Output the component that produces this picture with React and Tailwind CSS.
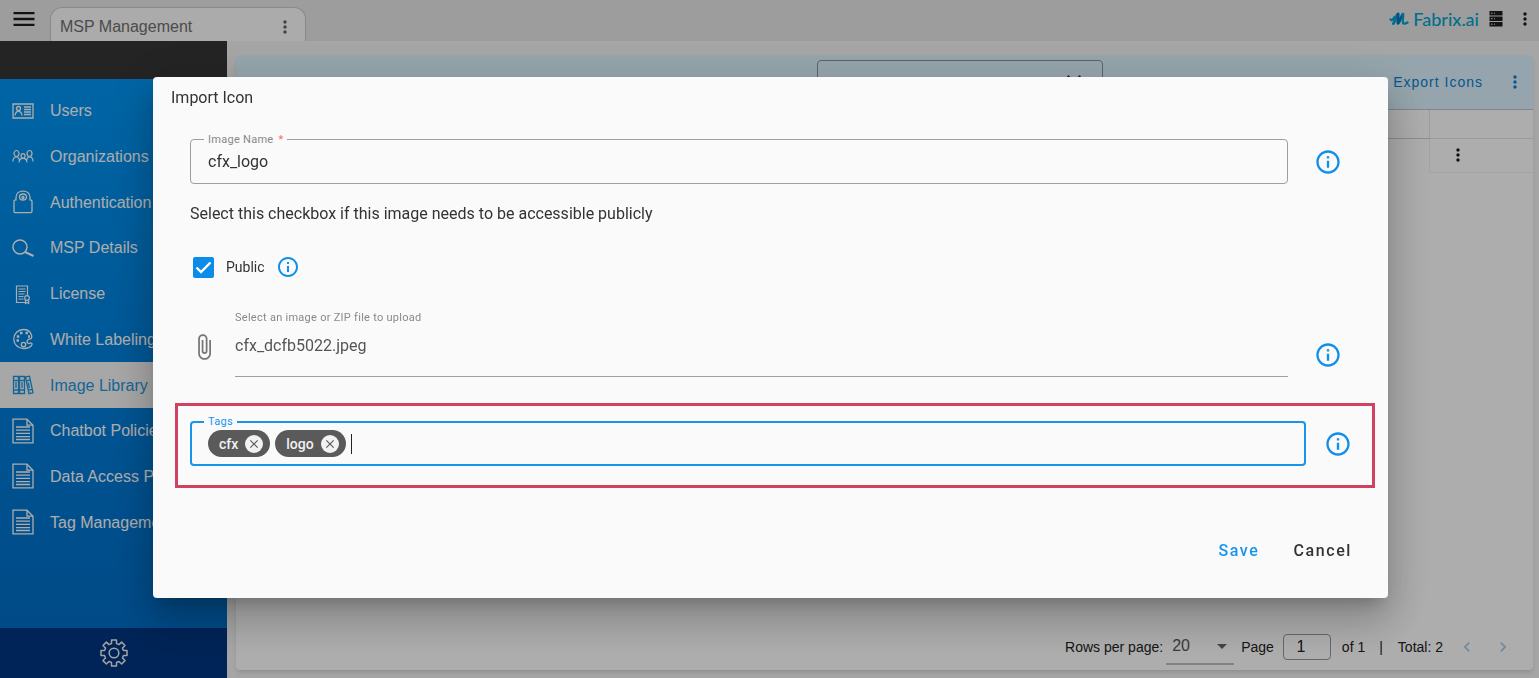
import { useState } from "react";
import {
  MdArrowDropDown,
  MdAttachFile,
  MdChevronLeft,
  MdChevronRight,
  MdClose,
  MdInfoOutline,
  MdMenu,
  MdMoreVert,
} from "react-icons/md";

const iconProps = {
  width: 22,
  height: 26,
  viewBox: "0 0 22 26",
  fill: "none",
  stroke: "currentColor",
  strokeWidth: 1.3,
};

function UsersIcon() {
  return (
    <svg {...iconProps}>
      <path d="M1 6h20v14H1z" />
      <circle cx="6.5" cy="10.5" r="2" />
      <path d="M3 17.5c.3-3 1.5-4.2 3.5-4.2s3.2 1.2 3.5 4.2M12 9h7M12 11.5h7M12 14h7M12 16.5h7" />
    </svg>
  );
}

function OrganizationsIcon() {
  return (
    <svg {...iconProps} strokeWidth={1.2}>
      <ellipse cx="4.5" cy="9.5" rx="2.5" ry="3" />
      <ellipse cx="17.5" cy="9.5" rx="2.5" ry="3" />
      <ellipse cx="11" cy="12" rx="2" ry="2.4" />
      <path d="M1 17.5c0-3 1-4.500 3.500-4.500 1.500 0 2.500 1 2.800 3M21 17.500c0-3-1-4.500-3.500-4.500-1.500 0-2.500 1-2.800 3M7 18.500c.2-3 1.800-4.100 4-4.100s3.800 1.100 4 4.100" />
    </svg>
  );
}

function AuthIcon() {
  return (
    <svg {...iconProps}>
      <path d="M2 12.5c0-1 .8-1.700 2-1.700V8.500C4 4.500 7 2.200 11 2.200s7 2.300 7 6.300v2.300c1.200 0 2 .7 2 1.700v9.800c0 .8-.5 1.300-1.300 1.300H3.300c-.8 0-1.300-.5-1.300-1.300z" />
      <ellipse cx="11" cy="8" rx="3.500" ry="3" />
      <circle cx="11" cy="8.500" r="1" />
    </svg>
  );
}

function DetailsIcon() {
  return (
    <svg {...iconProps} strokeWidth={1.5}>
      <circle cx="8" cy="12" r="7" />
      <path d="M13 17l8.5 4" strokeWidth="2" />
    </svg>
  );
}

function LicenseIcon() {
  return (
    <svg {...iconProps} strokeWidth={1.2}>
      <path d="M13 21.5H4.500V5h11v9M6.500 8h7M6.500 10.500h7M6.500 13h6M6.500 15.500h5M6.500 18h5" />
      <circle cx="15" cy="17" r="2.300" />
      <path d="M13.500 19v3.500l1.500-1 1.700 1V19" />
    </svg>
  );
}

function PaletteIcon() {
  return (
    <svg {...iconProps}>
      <path d="M11.5 3.5C6 3.5 1.800 7.500 1.800 13S6 22.500 11.500 22.500c4.500 0 7.500-1.500 8.500-4 .4-1.200-1-1.800-2-1.300-1.500.7-3 0-3-1.700 0-2 2-2.300 3.500-2.700 1.500-.5 1.500-2.500.8-4.300-1.200-3-4.300-5-7.800-5z" />
      <circle cx="11.500" cy="18.500" r="2.200" />
      <path d="M8 7h2.500M13.500 7h2.500M4.800 10.500h2.500M4.500 14.500h2.500M16 10.500h2" strokeWidth="2.600" />
    </svg>
  );
}

function LibraryIcon() {
  return (
    <svg {...iconProps}>
      <path d="M1.500 4.500h5v17h-5zM7.500 4.500h5v17h-5zM13.500 5l4-.8 3.500 16.600-4 .9zM1.500 8.500h5M1.500 18h5M7.500 8.500h5M7.500 18h5M14.300 8.800l4-.8M16.300 18.200l4-.8" />
      <path d="M4 10v6M10 10v6M16.300 10.500l1.200 5.500" />
    </svg>
  );
}

function DocIcon() {
  return (
    <svg {...iconProps}>
      <path d="M1 1.200h14l6 6v17.600H1z" />
      <path d="M15 1.200v6h6M4 9h14M4 12.200h14M4 15.400h14M4 18.600h14M4 21.500h14" />
    </svg>
  );
}

function GearIcon() {
  return (
    <svg
      width="28"
      height="28"
      viewBox="0 0 28 28"
      fill="none"
      stroke="currentColor"
      strokeWidth="1.5"
      strokeLinejoin="round"
    >
      <path d="M11.500 1h5v3.600l2.500 1 2.600-2.500 3.400 3.400-2.500 2.600 1 2.400H27v5h-3.500l-1 2.500 2.500 2.600-3.400 3.400-2.600-2.500-2.500 1V27h-5v-3.500l-2.500-1L6.400 25 3 21.600 5.500 19l-1-2.500H1v-5h3.500l1-2.400L3 6.500l3.400-3.400L9 5.600l2.500-1z" />
      <circle cx="14" cy="14" r="4.800" />
    </svg>
  );
}

function BrandMark() {
  return (
    <svg
      width="20"
      height="16"
      viewBox="0 0 20 16"
      fill="none"
      strokeLinecap="round"
      strokeLinejoin="round"
    >
      <path d="M1.500 8.500C2.500 10 4 8.500 5.500 6" stroke="#00a5d0" strokeWidth="2.200" />
      <path d="M4.500 12.500C5.500 12 7 4 9 3" stroke="#00a5d0" strokeWidth="3" />
      <path d="M9 3c1 1.500-1 8 0 9.500C10.500 12.500 12 4.500 14 3" stroke="#0079c4" strokeWidth="2.600" />
      <path d="M14 3c.8 2-1.200 8 .3 9.300 1 .7 2.500.2 4.200-.8" stroke="#00a5d0" strokeWidth="2.300" />
    </svg>
  );
}

function ServerIcon() {
  return (
    <svg width="14" height="16" viewBox="0 0 14 16">
      <path
        fill="#1d1d1d"
        d="M.5 0h13v4.500H.5zM.5 5.500h13V10H.5zM.5 11h13v4.500H.5z"
      />
      <path stroke="#e8e8e8" d="M2 2.200h1.500M5 2.200h1M2 7.700h1.500M5 7.700h1M2 13.200h1.500M5 13.200h1" />
    </svg>
  );
}

const NAV = [
  { label: "Users", icon: UsersIcon },
  { label: "Organizations", icon: OrganizationsIcon },
  { label: "Authentication", icon: AuthIcon },
  { label: "MSP Details", icon: DetailsIcon },
  { label: "License", icon: LicenseIcon },
  { label: "White Labeling", icon: PaletteIcon },
  { label: "Image Library", icon: LibraryIcon, active: true },
  { label: "Chatbot Policies", icon: DocIcon },
  { label: "Data Access Policies", icon: DocIcon },
  { label: "Tag Management", icon: DocIcon },
];

function Header() {
  return (
    <header className="flex h-[41px] items-end bg-[#e8e8e8]">
      <button aria-label="Menu" className="mb-2 ml-[10px] text-[#1d1d1d]">
        <MdMenu size={28} />
      </button>
      <div className="ml-3 flex h-[34px] w-64 items-center justify-between rounded-t-xl border border-b-0 border-[#c4cccc] bg-[#fcfcfc] pt-1 pr-[10px] pl-[9px]">
        <span className="text-base text-[#707070]">MSP Management</span>
        <button aria-label="Tab options" className="text-[#5c6370]">
          <MdMoreVert size={20} />
        </button>
      </div>
      <div className="ml-auto flex h-full items-center pr-1 pb-1">
        <BrandMark />
        <span className="ml-1 font-['Lato',sans-serif] text-lg leading-5 font-medium text-[#00a5d0]">
          Fabrix.ai
        </span>
        <button aria-label="Servers" className="ml-[10px]">
          <ServerIcon />
        </button>
        <button aria-label="More" className="ml-3 text-[#1d1d1d]">
          <MdMoreVert size={20} />
        </button>
      </div>
    </header>
  );
}

function Sidebar() {
  return (
    <aside className="flex w-[227px] shrink-0 flex-col bg-linear-to-b from-[#0098f7] to-[#006ac4]">
      <div className="h-[38px] bg-[#353535]" />
      <nav className="mt-[9px] grid h-[457px] auto-rows-fr">
        {NAV.map((item) => {
          const Icon = item.icon;
          return (
            <a
              key={item.label}
              href="#"
              className={`flex items-center gap-4 pl-3 whitespace-nowrap ${
                item.active ? "bg-[#f7f7f7] text-[#1f96dc]" : "text-white"
              }`}
            >
              <Icon />
              <span className="pt-px text-base">{item.label}</span>
            </a>
          );
        })}
      </nav>
      <div className="mt-auto flex h-[50px] items-center justify-center bg-[#003580] text-[#f0f0f0]">
        <button aria-label="Settings">
          <GearIcon />
        </button>
      </div>
    </aside>
  );
}

function LibraryPage() {
  return (
    <main className="flex min-w-0 flex-1 bg-[#f5f5f5] pt-[14px] pr-[6px] pb-2 pl-[9px]">
      <section className="flex flex-1 flex-col overflow-hidden rounded bg-white shadow-md">
        <div className="flex h-[55px] items-center justify-end border-b border-[#b9c5ca] bg-[#def4ff] pr-2">
          <div className="mr-[290px] flex h-[45px] w-[286px] items-center rounded border border-[#8a9499] pr-4">
            <input aria-label="Search" className="min-w-0 flex-1 bg-transparent outline-none" />
            <button aria-label="Clear search" className="text-[#444]">
              <MdClose size={24} />
            </button>
          </div>
          <button className="text-sm tracking-[1px] text-[#0a7fd0]">Export Icons</button>
          <button aria-label="Library actions" className="ml-[22px] text-[#0a7fd0]">
            <MdMoreVert size={20} />
          </button>
        </div>

        <table className="w-full table-fixed">
          <thead>
            <tr className="h-7">
              <th className="border-b border-[#cfcfcf]" />
              <th className="w-26 border-b border-l border-[#e4e4e4]" />
            </tr>
          </thead>
          <tbody>
            <tr className="h-[34px]">
              <td />
              <td className="border-b border-l border-[#f0f0f0]">
                <button aria-label="Row actions" className="ml-[18px] block text-[#1d1d1d]">
                  <MdMoreVert size={20} />
                </button>
              </td>
            </tr>
          </tbody>
        </table>

        <footer className="mt-auto flex items-center justify-end pr-5 pb-[5px] text-sm text-[#222]">
          <label htmlFor="rows">Rows per page:</label>
          <div className="relative ml-[3px] flex h-9 w-17 items-center border-b-2 border-[#c0c0c0]">
            <select
              id="rows"
              defaultValue="20"
              className="w-full appearance-none bg-transparent pl-[6px] text-base text-[#555]"
            >
              <option>20</option>
              <option>50</option>
            </select>
            <MdArrowDropDown size={24} className="pointer-events-none absolute right-0 text-[#666]" />
          </div>
          <label htmlFor="page" className="ml-[7px]">
            Page
          </label>
          <input
            id="page"
            defaultValue="1"
            className="ml-[9px] h-[26px] w-12 rounded border border-[#999] pr-3 text-center text-base"
          />
          <span className="ml-[11px]">of 1</span>
          <span className="ml-[14px]">|</span>
          <span className="ml-[15px]">Total: 2</span>
          <button aria-label="Previous page" className="ml-[14px] text-[#a9cbe6]">
            <MdChevronLeft size={20} />
          </button>
          <button aria-label="Next page" className="ml-4 text-[#a9cbe6]">
            <MdChevronRight size={20} />
          </button>
        </footer>
      </section>
    </main>
  );
}

function InfoButton({ size = 28 }) {
  return (
    <button type="button" aria-label="More information" className="text-[#0f8fea]">
      <MdInfoOutline size={size} />
    </button>
  );
}

function Chip({ label, onRemove }) {
  return (
    <span className="flex h-[27px] items-center gap-[7px] rounded-full bg-[#5a5a5a] pr-[7px] pl-[11px] text-sm font-medium text-[#f0f0f0]">
      {label}
      <button
        type="button"
        aria-label={`Remove ${label}`}
        onClick={onRemove}
        className="flex size-[18px] items-center justify-center rounded-full bg-[#f2f2f2] text-[#5a5a5a]"
      >
        <MdClose size={14} />
      </button>
    </span>
  );
}

function ImportDialog() {
  const [tags, setTags] = useState(["cfx", "logo"]);

  return (
    <div className="fixed inset-0 z-10 flex items-start bg-black/32 pt-[77px] pr-[151px] pl-[153px] font-['Roboto',sans-serif] text-[#333]">
      <form
        role="dialog"
        aria-label="Import Icon"
        onSubmit={(e) => e.preventDefault()}
        className="w-full rounded bg-[#fafafa] pb-[35px] shadow-[0_11px_15px_-7px_rgba(0,0,0,0.2),0_24px_38px_3px_rgba(0,0,0,0.14),0_9px_46px_8px_rgba(0,0,0,0.12)]"
      >
        <h2 className="pt-[9px] pl-[18px] text-base leading-6">Import Icon</h2>

        {/* Image name */}
        <div className="mt-[29px] flex items-center gap-[26px] pr-[46px] pl-[37px]">
          <div className="relative flex-1">
            <label
              htmlFor="name"
              className="absolute -top-[6px] left-[14px] bg-[#fafafa] px-1 text-[11px] leading-[14px] tracking-wide text-[#888]"
            >
              Image Name <span className="ml-[2px] text-[#ff6b6b]">*</span>
            </label>
            <input
              id="name"
              defaultValue="cfx_logo"
              className="block h-[45px] w-full rounded border border-[#9e9e9e] px-[17px] text-base outline-none"
            />
          </div>
          <InfoButton />
        </div>

        {/* Visibility */}
        <p className="mt-[18px] pl-[37px] text-base leading-6">
          Select this checkbox if this image needs to be accessible publicly
        </p>
        <div className="mt-[29px] flex items-center pl-10">
          <span className="relative flex">
            <input
              id="public"
              type="checkbox"
              defaultChecked
              className="peer size-[21px] appearance-none rounded-xs border-2 border-[#0c8ce9] checked:bg-[#0c8ce9]"
            />
            <svg
              viewBox="0 0 21 21"
              className="pointer-events-none absolute inset-0 hidden fill-none stroke-white stroke-[2.4] peer-checked:block"
            >
              <path d="M3.500 10.500l4.500 4.500L17.500 5.500" />
            </svg>
          </span>
          <label htmlFor="public" className="mr-[11px] ml-3 text-sm">
            Public
          </label>
          <InfoButton size={24} />
        </div>

        {/* File */}
        <div className="mt-8 flex items-end pr-[46px] pl-[37px]">
          <button type="button" aria-label="Attach file" className="mr-[17px] mb-4 text-[#777]">
            <MdAttachFile size={28} />
          </button>
          <div className="mr-[26px] flex-1 border-b border-[#9e9e9e] pb-[18px]">
            <label
              htmlFor="file"
              className="block text-[11px] leading-[14px] tracking-wide text-[#888]"
            >
              Select an image or ZIP file to upload
            </label>
            <input
              id="file"
              readOnly
              value="cfx_dcfb5022.jpeg"
              className="mt-[9px] block h-6 w-full text-base text-[#555] outline-none"
            />
          </div>
          <div className="mb-2 flex">
            <InfoButton />
          </div>
        </div>

        {/* Tags */}
        <div className="mt-[26px] mr-[13px] ml-[22px] flex h-[85px] items-center gap-[18px] border-3 border-[#cf4262] pr-[20px] pb-1 pl-3">
          <div className="relative flex h-[45px] flex-1 items-center gap-[5px] rounded border-2 border-[#1794ee] pl-4">
            <label
              htmlFor="tags"
              className="absolute -top-[8px] left-3 bg-[#fafafa] px-1 text-[11px] leading-[14px] tracking-wide text-[#1794ee]"
            >
              Tags
            </label>
            {tags.map((tag) => (
              <Chip
                key={tag}
                label={tag}
                onRemove={() => setTags(tags.filter((t) => t !== tag))}
              />
            ))}
            <span className="h-5 w-px bg-[#222]" />
            <input id="tags" className="min-w-0 flex-1 bg-transparent outline-none" />
          </div>
          <InfoButton />
        </div>

        {/* Actions */}
        <div className="mt-[51px] flex justify-end gap-[34px] pr-9 text-base font-medium tracking-widest">
          <button type="submit" className="text-[#1794ee]">
            Save
          </button>
          <button type="button">Cancel</button>
        </div>
      </form>
    </div>
  );
}

export default function App() {
  return (
    <div className="flex min-h-screen flex-col font-['Liberation_Sans',Arial,sans-serif]">
      <Header />
      <div className="flex flex-1">
        <Sidebar />
        <LibraryPage />
      </div>
      <ImportDialog />
    </div>
  );
}
